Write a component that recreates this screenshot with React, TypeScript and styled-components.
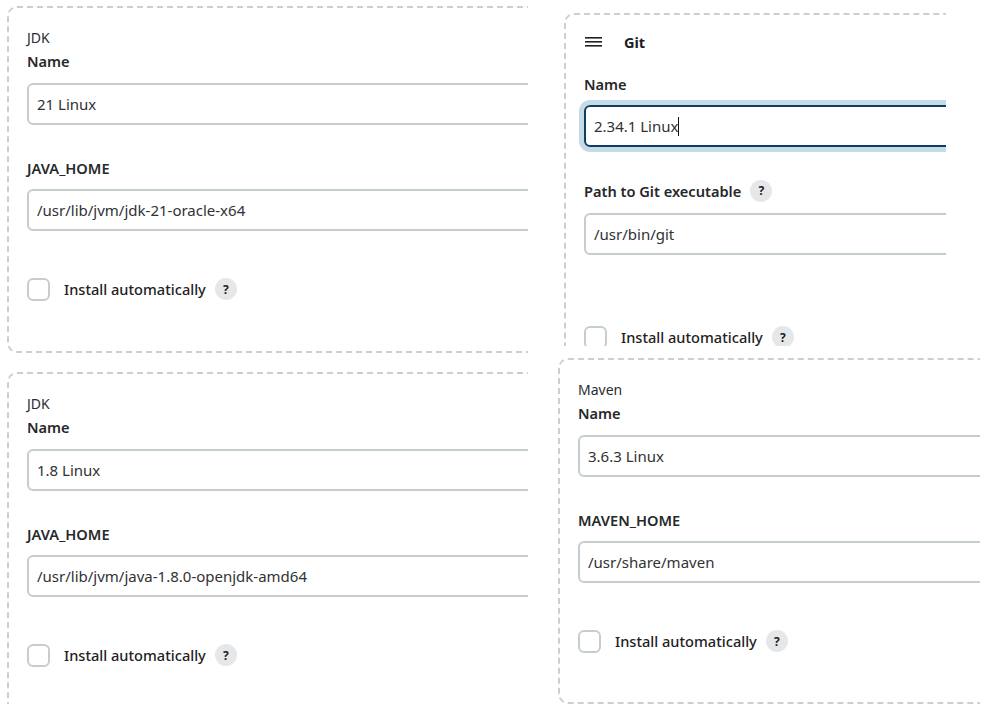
import React from "react";
import styled, { createGlobalStyle } from "styled-components";

const Global = createGlobalStyle`
  html, body { margin: 0; padding: 0; background: #fff; overflow: hidden; }
  body { font-family: "Noto Sans", "Open Sans", "Liberation Sans", sans-serif; color: #1f2123; }
`;

const Page = styled.div`
  display: flex;
  align-items: flex-start;
  width: 989px;
  height: 704px;
`;

const LeftColumn = styled.div`
  width: 521px;
  padding: 6px 0 0 7px;
  overflow: hidden;
  display: flex;
  flex-direction: column;
  gap: 19px;
  height: 698px;
`;

const RightColumn = styled.div`
  margin-left: 30px;
  display: flex;
  flex-direction: column;
`;

const Clip = styled.div<{ $w: number; $h?: number; $ml?: number; $mt?: number }>`
  width: ${(p) => p.$w}px;
  ${(p) => (p.$h ? `height: ${p.$h}px;` : "")}
  margin-left: ${(p) => p.$ml ?? 0}px;
  margin-top: ${(p) => p.$mt ?? 0}px;
  overflow: hidden;
  flex-shrink: 0;
`;

const Panel = styled.section<{ $pt?: number; $h?: number }>`
  box-sizing: border-box;
  width: 620px;
  ${(p) => (p.$h ? `height: ${p.$h}px;` : "")}
  border: 2px dashed #c9d0d4;
  border-radius: 10px;
  padding: ${(p) => p.$pt ?? 20}px 18px 0 18px;
  flex-shrink: 0;
`;

const Kind = styled.div`
  font-size: 14px;
  line-height: 20px;
  color: #2b2d2f;
`;

const Header = styled.div`
  display: flex;
  align-items: center;
  gap: 21px;
  height: 20px;
  padding-left: 1px;
`;

const HeaderTitle = styled.span`
  font-size: 14.5px;
  font-weight: 700;
  color: #1b1d1f;
`;

const Label = styled.div<{ $mt: number }>`
  display: flex;
  align-items: center;
  margin-top: ${(p) => p.$mt}px;
  font-size: 14.6px;
  line-height: 20px;
  font-weight: 600;
  color: #26282a;
`;

const Input = styled.div<{ $mt: number; $focused?: boolean }>`
  box-sizing: border-box;
  margin-top: ${(p) => p.$mt}px;
  height: 42px;
  border: 2px solid ${(p) => (p.$focused ? "#0f3f60" : "#c5cdd1")};
  border-radius: 6px;
  padding: 0 8px;
  display: flex;
  align-items: center;
  font-size: 15px;
  color: #303234;
  box-shadow: ${(p) => (p.$focused ? "0 0 0 5px #c5dce8" : "none")};
`;

const Caret = styled.span`
  display: inline-block;
  width: 1px;
  height: 19px;
  background: #111;
`;

const CheckRow = styled.div<{ $mt: number }>`
  display: flex;
  align-items: center;
  margin-top: ${(p) => p.$mt}px;
  height: 24px;
  font-size: 14.6px;
  font-weight: 500;
  color: #1f2123;
`;

const Box = styled.span`
  box-sizing: border-box;
  width: 23px;
  height: 23px;
  border: 2px solid #c5cdd1;
  border-radius: 6px;
  margin-right: 14px;
  background: #fff;
`;

const Help = styled.span`
  display: inline-flex;
  align-items: center;
  justify-content: center;
  width: 22px;
  height: 22px;
  border-radius: 50%;
  background: #e6e7e8;
  color: #1f2123;
  font-size: 12px;
  font-weight: 700;
  margin-left: 9px;
`;

const Hamburger = () => (
  <svg width="18" height="12" viewBox="0 0 18 12" aria-hidden>
    <rect x="0" y="1" width="17" height="1.6" fill="#222" />
    <rect x="0" y="5" width="17" height="1.6" fill="#222" />
    <rect x="0" y="9" width="17" height="1.6" fill="#222" />
  </svg>
);

type ToolProps = { kind: string; name: string; homeLabel: string; home: string };

const ToolPanel = ({ kind, name, homeLabel, home }: ToolProps) => (
  <Panel $h={347}>
    <Kind>{kind}</Kind>
    <Label $mt={3}>Name</Label>
    <Input $mt={12}>{name}</Input>
    <Label $mt={33}>{homeLabel}</Label>
    <Input $mt={11}>{home}</Input>
    <CheckRow $mt={46}>
      <Box />
      Install automatically
      <Help>?</Help>
    </CheckRow>
  </Panel>
);

export default function App() {
  return (
    <>
      <Global />
      <Page>
        <LeftColumn>
          <ToolPanel kind="JDK" name="21 Linux" homeLabel="JAVA_HOME" home="/usr/lib/jvm/jdk-21-oracle-x64" />
          <ToolPanel kind="JDK" name="1.8 Linux" homeLabel="JAVA_HOME" home="/usr/lib/jvm/java-1.8.0-openjdk-amd64" />
        </LeftColumn>
        <RightColumn>
          <Clip $w={382} $h={333} $ml={6} $mt={13}>
            <Panel $pt={17} $h={400}>
              <Header>
                <Hamburger />
                <HeaderTitle>Git</HeaderTitle>
              </Header>
              <Label $mt={22}>Name</Label>
              <Input $mt={11} $focused>
                2.34.1 Linux
                <Caret />
              </Input>
              <Label $mt={33}>
                Path to Git executable
                <Help>?</Help>
              </Label>
              <Input $mt={11}>/usr/bin/git</Input>
              <CheckRow $mt={70}>
                <Box />
                Install automatically
                <Help>?</Help>
              </CheckRow>
            </Panel>
          </Clip>
          <Clip $w={422} $mt={12}>
            <Panel $h={346}>
              <Kind>Maven</Kind>
              <Label $mt={3}>Name</Label>
              <Input $mt={12}>3.6.3 Linux</Input>
              <Label $mt={33}>MAVEN_HOME</Label>
              <Input $mt={11}>/usr/share/maven</Input>
              <CheckRow $mt={46}>
                <Box />
                Install automatically
                <Help>?</Help>
              </CheckRow>
            </Panel>
          </Clip>
        </RightColumn>
      </Page>
    </>
  );
}
